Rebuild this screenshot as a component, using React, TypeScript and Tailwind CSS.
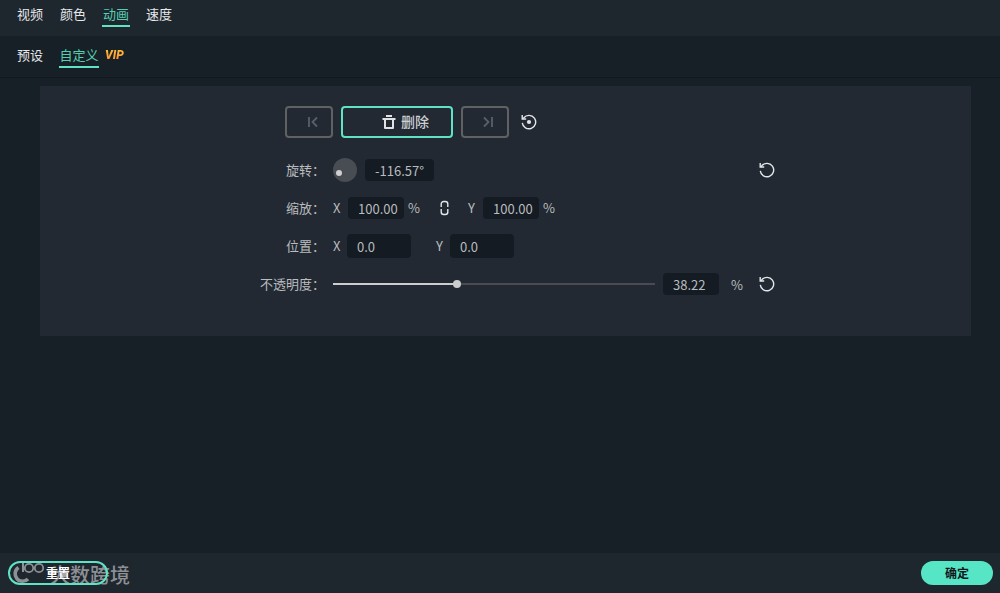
import { useState, type ReactNode } from "react";

const mainTabs = ["视频", "颜色", "动画", "速度"];

const inputClass = "rounded bg-[#141b22] text-[13px] text-[#b9bcbf] outline-none";

const ResetIcon = ({ dot = false }: { dot?: boolean }) => (
  <svg width="16" height="16" viewBox="0 0 16 16" fill="none" stroke="#e4e6e8" strokeWidth="1.4">
    <path d="M1.3 8.8A6.7 6.7 0 1 0 2.8 3.8L1.6 5" />
    <path d="M1.2 1V5H5.2" />
    {dot && <circle cx="8" cy="8" r="2.1" fill="#e4e6e8" stroke="none" />}
  </svg>
);

const TrashIcon = () => (
  <svg width="14" height="16" viewBox="0 0 14 16" fill="none" stroke="#e0e2e4" strokeWidth="2">
    <path d="M4 2H10M0.5 5H13.5" />
    <path d="M3 5V14H11V5" strokeLinejoin="round" />
  </svg>
);

const StepIcon = ({ next = false }: { next?: boolean }) => (
  <svg width="10" height="12" viewBox="0 0 10 12" fill="none" stroke="#5b6066" strokeWidth="1.8">
    {next ? <path d="M1 1.5L5.5 6L1 10.5M9 1V11" /> : <path d="M9 1.5L4.5 6L9 10.5M1 1V11" />}
  </svg>
);

const LinkIcon = () => (
  <svg width="9" height="16" viewBox="0 0 9 16" fill="none" stroke="#e4e6e8" strokeWidth="1.4">
    <path d="M1.2 7V4A2.5 2.5 0 0 1 3.7 1.5H5.3A2.5 2.5 0 0 1 7.8 4V7M1.2 9V12A2.5 2.5 0 0 0 3.7 14.5H5.3A2.5 2.5 0 0 0 7.8 12V9" />
  </svg>
);

const Row = ({ label, children }: { label: string; children: ReactNode }) => (
  <div className="flex h-[38px] items-center">
    <span className="w-[90px] shrink-0 text-right">{label}</span>
    <div className="flex min-w-0 flex-1 items-center pl-2">{children}</div>
  </div>
);

const Watermark = () => (
  <div className="pointer-events-none absolute left-2.5 top-2 flex text-[#8d9094]">
    <svg width="36" height="24" viewBox="0 0 36 24" fill="none" stroke="currentColor">
      <path d="M8.5 6.5A7.5 7.5 0 1 0 18 18" strokeWidth="3.6" />
      <path d="M13 2V11" strokeWidth="2" />
      <circle cx="19" cy="7" r="4.2" strokeWidth="1.8" />
      <circle cx="29" cy="7" r="4.2" strokeWidth="1.8" />
    </svg>
    <span className="pl-1 pt-0.5 text-[20px] font-medium leading-6">大数跨境</span>
  </div>
);

const App = () => {
  const [tab, setTab] = useState("动画");
  const [opacity, setOpacity] = useState(38.22);

  return (
    <div
      lang="zh-CN"
      className="flex min-h-screen flex-col bg-[#182027] font-['Noto_Sans_CJK_SC',sans-serif] text-[13px] leading-5 text-[#b9bcbf]"
    >
      <nav className="flex h-9 items-start gap-[15px] bg-[#1e262e] px-4 pt-1">
        {mainTabs.map((name) => (
          <button
            key={name}
            onClick={() => setTab(name)}
            className={`h-[23px] w-7 border-b-2 pb-0.5 leading-5 ${
              tab === name ? "border-[#5fe3c4] text-[#55cfb2]" : "border-transparent text-[#e6e8ea]"
            }`}
          >
            {name}
          </button>
        ))}
      </nav>

      <nav className="flex h-[42px] items-start border-b border-[#12181e] px-4 pt-[9px]">
        <button className="h-[23px] w-7 border-b-2 border-transparent pb-0.5 leading-5 text-[#e6e8ea]">预设</button>
        <button className="ml-[15px] h-[23px] w-10 border-b-2 border-[#5fe3c4] pb-0.5 leading-5 text-[#55cfb2]">
          自定义
        </button>
        <span className="ml-1.5 bg-linear-to-b from-[#ffd02e] to-[#ff7a3c] bg-clip-text pr-0.5 font-['Roboto',sans-serif] text-xs leading-5 font-black italic text-transparent">
          VIP
        </span>
      </nav>

      <main className="flex-1 pl-10 pr-[29px] pt-2">
        <section className="bg-[#222932] pb-[33px] pt-5">
          <div className="mx-auto max-w-[541px] pr-px">
            <div className="flex items-center gap-2 pl-[50px]">
              <button
                aria-label="上一个关键帧"
                className="flex h-8 w-12 items-center justify-center rounded border-2 border-[#5f6163] pl-[7px]"
              >
                <StepIcon />
              </button>
              <button className="flex h-8 w-28 items-center justify-center gap-[5px] rounded border-2 border-[#5fe3c4] pl-[17px] text-sm font-medium text-[#cdcfd1]">
                <TrashIcon />
                <span className="pb-0.5">删除</span>
              </button>
              <button
                aria-label="下一个关键帧"
                className="flex h-8 w-12 items-center justify-center rounded border-2 border-[#5f6163] pl-[5px]"
              >
                <StepIcon next />
              </button>
              <button aria-label="全部重置" className="ml-1">
                <ResetIcon dot />
              </button>
            </div>

            <div className="mt-[13px]">
              <Row label="旋转：">
                <div
                  role="slider"
                  aria-label="旋转角度"
                  aria-valuenow={-116.57}
                  tabIndex={0}
                  className="flex size-6 items-center rounded-full bg-[#484d54] pl-[3px] pt-1.5"
                >
                  <span className="size-1.5 rounded-full bg-[#d0d0d0]" />
                </div>
                <input aria-label="旋转" defaultValue="-116.57°" className={`${inputClass} ml-2 h-[22px] w-[69px] pl-2.5`} />
                <button aria-label="重置旋转" className="ml-auto">
                  <ResetIcon />
                </button>
              </Row>

              <Row label="缩放：">
                <label htmlFor="scale-x" className="w-[15px]">X</label>
                <input id="scale-x" defaultValue="100.00" className={`${inputClass} h-[22px] w-14 pl-2.5`} />
                <span className="ml-1">%</span>
                <button aria-label="锁定比例" className="ml-5">
                  <LinkIcon />
                </button>
                <label htmlFor="scale-y" className="ml-[19px] w-[15px]">Y</label>
                <input id="scale-y" defaultValue="100.00" className={`${inputClass} h-[22px] w-14 pl-2.5`} />
                <span className="ml-1">%</span>
              </Row>

              <Row label="位置：">
                <label htmlFor="pos-x" className="w-[14px]">X</label>
                <input id="pos-x" defaultValue="0.0" className={`${inputClass} h-6 w-16 pl-2.5`} />
                <label htmlFor="pos-y" className="ml-[25px] w-[14px]">Y</label>
                <input id="pos-y" defaultValue="0.0" className={`${inputClass} h-6 w-16 pl-2.5`} />
              </Row>

              <Row label="不透明度：">
                <input
                  type="range"
                  aria-label="不透明度"
                  min={0}
                  max={100}
                  step={0.01}
                  value={opacity}
                  onChange={(e) => setOpacity(Number(e.target.value))}
                  style={{ backgroundImage: `linear-gradient(to right, #cdcdcd ${opacity}%, #484c52 ${opacity}%)` }}
                  className="h-0.5 min-w-0 flex-1 appearance-none [&::-webkit-slider-thumb]:size-2 [&::-webkit-slider-thumb]:appearance-none [&::-webkit-slider-thumb]:rounded-full [&::-webkit-slider-thumb]:bg-[#cdcdcd]"
                />
                <input
                  aria-label="不透明度数值"
                  value={opacity.toFixed(2)}
                  onChange={(e) => setOpacity(Number(e.target.value) || 0)}
                  className={`${inputClass} ml-2 h-[22px] w-14 pl-2.5`}
                />
                <span className="ml-3 w-3 pt-0.5">%</span>
                <button aria-label="重置不透明度" className="ml-4">
                  <ResetIcon />
                </button>
              </Row>
            </div>
          </div>
        </section>
      </main>

      <footer className="relative flex h-10 items-center justify-between bg-[#1e262e] pl-2 pr-[7px]">
        <Watermark />
        <button className="relative h-6 w-[100px] rounded-full border-2 border-[#5fe3c4] text-xs font-bold text-white">
          重置
        </button>
        <button className="h-6 w-[72px] rounded-full bg-[#56e6c5] text-xs font-bold text-[#10181c]">确定</button>
      </footer>
    </div>
  );
};

export default App;
